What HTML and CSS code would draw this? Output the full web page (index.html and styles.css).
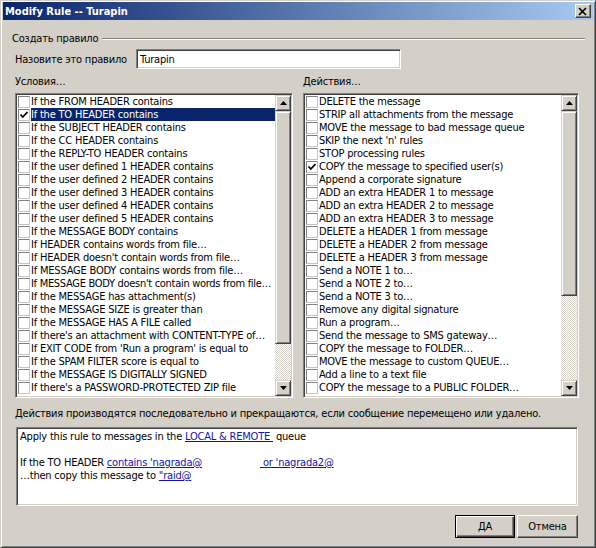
FILE: index.html
```html
<!DOCTYPE html>
<html lang="ru">
  <head>
    <meta charset="UTF-8" />
    <title>Modify Rule -- Turapin</title>
    <link rel="stylesheet" href="styles.css">
  </head>
  <body>
    <div class="window">
      <div class="titlebar">
        <span class="title">Modify Rule -- Turapin</span>
        <span class="close">
          <svg width="10" height="9" viewBox="0 0 10 9"><path d="M1 1 L8 8 M8 1 L1 8" stroke="#000" stroke-width="1.7" fill="none"/></svg>
        </span>
      </div>

      <div class="content">
        <div class="group">
          <span>Создать правило</span>
          <span class="etched"></span>
        </div>

        <div class="name-row">
          <label class="name-label" for="ruleName">Назовите это правило</label>
          <input id="ruleName" class="field" type="text" value="Turapin">
        </div>

        <div class="lists">
          <!-- conditions -->
          <div class="col">
            <div class="col-label">Условия…</div>
            <div class="listbox">
              <ul class="items">
                <li><span class="box"></span><span class="text">If the FROM HEADER contains</span></li>
                <li class="selected"><span class="box"><svg width="10" height="10" viewBox="0 0 10 10"><path d="M1.5 4.5 L3.8 7 L8.5 2" stroke="#000" stroke-width="1.8" fill="none"/></svg></span><span class="text">If the TO HEADER contains</span></li>
                <li><span class="box"></span><span class="text">If the SUBJECT HEADER contains</span></li>
                <li><span class="box"></span><span class="text">If the CC HEADER contains</span></li>
                <li><span class="box"></span><span class="text">If the REPLY-TO HEADER contains</span></li>
                <li><span class="box"></span><span class="text">If the user defined 1 HEADER contains</span></li>
                <li><span class="box"></span><span class="text">If the user defined 2 HEADER contains</span></li>
                <li><span class="box"></span><span class="text">If the user defined 3 HEADER contains</span></li>
                <li><span class="box"></span><span class="text">If the user defined 4 HEADER contains</span></li>
                <li><span class="box"></span><span class="text">If the user defined 5 HEADER contains</span></li>
                <li><span class="box"></span><span class="text">If the MESSAGE BODY contains</span></li>
                <li><span class="box"></span><span class="text">If HEADER contains words from file…</span></li>
                <li><span class="box"></span><span class="text">If HEADER doesn't contain words from file…</span></li>
                <li><span class="box"></span><span class="text">If MESSAGE BODY contains words from file…</span></li>
                <li><span class="box"></span><span class="text tight">If MESSAGE BODY doesn't contain words from file…</span></li>
                <li><span class="box"></span><span class="text">If the MESSAGE has attachment(s)</span></li>
                <li><span class="box"></span><span class="text">If the MESSAGE SIZE is greater than</span></li>
                <li><span class="box"></span><span class="text">If the MESSAGE HAS A FILE called</span></li>
                <li><span class="box"></span><span class="text">If there's an attachment with CONTENT-TYPE of…</span></li>
                <li><span class="box"></span><span class="text">If EXIT CODE from 'Run a program' is equal to</span></li>
                <li><span class="box"></span><span class="text">If the SPAM FILTER score is equal to</span></li>
                <li><span class="box"></span><span class="text">If the MESSAGE IS DIGITALLY SIGNED</span></li>
                <li><span class="box"></span><span class="text">If there's a PASSWORD-PROTECTED ZIP file</span></li>
              </ul>
              <div class="scrollbar">
                <span class="sb-btn"><svg width="7" height="4" viewBox="0 0 7 4"><path d="M0 4 L3.5 0 L7 4 Z" fill="#000"/></svg></span>
                <span class="sb-thumb thumb-left"></span>
                <span class="sb-track"></span>
                <span class="sb-btn"><svg width="7" height="4" viewBox="0 0 7 4"><path d="M0 0 L3.5 4 L7 0 Z" fill="#000"/></svg></span>
              </div>
            </div>
          </div>

          <!-- actions -->
          <div class="col">
            <div class="col-label">Действия…</div>
            <div class="listbox">
              <ul class="items">
                <li><span class="box"></span><span class="text">DELETE the message</span></li>
                <li><span class="box"></span><span class="text">STRIP all attachments from the message</span></li>
                <li><span class="box"></span><span class="text">MOVE the message to bad message queue</span></li>
                <li><span class="box"></span><span class="text">SKIP the next 'n' rules</span></li>
                <li><span class="box"></span><span class="text">STOP processing rules</span></li>
                <li><span class="box"><svg width="10" height="10" viewBox="0 0 10 10"><path d="M1.5 4.5 L3.8 7 L8.5 2" stroke="#000" stroke-width="1.8" fill="none"/></svg></span><span class="text">COPY the message to specified user(s)</span></li>
                <li><span class="box"></span><span class="text">Append a corporate signature</span></li>
                <li><span class="box"></span><span class="text">ADD an extra HEADER 1 to message</span></li>
                <li><span class="box"></span><span class="text">ADD an extra HEADER 2 to message</span></li>
                <li><span class="box"></span><span class="text">ADD an extra HEADER 3 to message</span></li>
                <li><span class="box"></span><span class="text">DELETE a HEADER 1 from message</span></li>
                <li><span class="box"></span><span class="text">DELETE a HEADER 2 from message</span></li>
                <li><span class="box"></span><span class="text">DELETE a HEADER 3 from message</span></li>
                <li><span class="box"></span><span class="text">Send a NOTE 1 to…</span></li>
                <li><span class="box"></span><span class="text">Send a NOTE 2 to…</span></li>
                <li><span class="box"></span><span class="text">Send a NOTE 3 to…</span></li>
                <li><span class="box"></span><span class="text">Remove any digital signature</span></li>
                <li><span class="box"></span><span class="text">Run a program…</span></li>
                <li><span class="box"></span><span class="text">Send the message to SMS gateway…</span></li>
                <li><span class="box"></span><span class="text">COPY the message to FOLDER…</span></li>
                <li><span class="box"></span><span class="text">MOVE the message to custom QUEUE…</span></li>
                <li><span class="box"></span><span class="text">Add a line to a text file</span></li>
                <li><span class="box"></span><span class="text">COPY the message to a PUBLIC FOLDER…</span></li>
              </ul>
              <div class="scrollbar">
                <span class="sb-btn"><svg width="7" height="4" viewBox="0 0 7 4"><path d="M0 4 L3.5 0 L7 4 Z" fill="#000"/></svg></span>
                <span class="sb-thumb thumb-right"></span>
                <span class="sb-track"></span>
                <span class="sb-btn"><svg width="7" height="4" viewBox="0 0 7 4"><path d="M0 0 L3.5 4 L7 0 Z" fill="#000"/></svg></span>
              </div>
            </div>
          </div>
        </div>

        <p class="note">Действия производятся последовательно и прекращаются, если сообщение перемещено или удалено.</p>

        <div class="desc">
          <div>Apply this rule to messages in the <a href="#">LOCAL &amp; REMOTE&nbsp;</a> queue</div>
          <div>&nbsp;</div>
          <div>If the TO HEADER <a href="#">contains 'nagrada@</a><span class="gap"></span><a href="#">&nbsp;or 'nagrada2@</a></div>
          <div>…then copy this message to <a href="#">"raid@</a></div>
        </div>

        <div class="buttons">
          <button class="btn default">ДА</button>
          <button class="btn cancel">Отмена</button>
        </div>
      </div>
    </div>
  </body>
</html>
```

FILE: styles.css
```css
body {
  margin: 0;
  padding: 0;
  font-family: "DejaVu Sans Condensed", "DejaVu Sans", sans-serif;
  font-stretch: condensed;
  font-size: 11px;
  letter-spacing: -0.2px;
  color: #000;
}

.window {
  width: 596px;
  height: 548px;
  box-sizing: border-box;
  background-color: #d4d0c8;
  border: 1px solid;
  border-color: #d4d0c8 #404040 #404040 #d4d0c8;
  box-shadow: inset 1px 1px #fff, inset -1px -1px #808080;
  padding: 1px 2px 2px 2px;
  display: flex;
  flex-direction: column;
}

.titlebar {
  height: 18px;
  flex: none;
  display: flex;
  align-items: center;
  justify-content: space-between;
  padding: 0 2px 0 2px;
  background: linear-gradient(to right, #0a246a, #a6caf0);
}

.title {
  color: #fff;
  font-weight: bold;
  font-size: 11px;
  letter-spacing: 0;
}

.close {
  width: 16px;
  height: 14px;
  box-sizing: border-box;
  display: flex;
  align-items: center;
  justify-content: center;
  background-color: #d4d0c8;
  border: 1px solid;
  border-color: #fff #404040 #404040 #fff;
  box-shadow: inset -1px -1px #808080;
}

.content {
  flex: 1;
  display: flex;
  flex-direction: column;
  padding: 12px 14px 0 12px;
}

/* group header with etched line */
.group {
  display: flex;
  align-items: center;
  height: 13px;
  line-height: 13px;
  margin-left: -3px;
  margin-right: -6px;
}

.etched {
  flex: 1;
  margin-left: 4px;
  border-top: 1px solid #808080;
  border-bottom: 1px solid #fff;
}

.name-row {
  display: flex;
  align-items: center;
  height: 20px;
  margin-top: 4px;
}

.name-label {
  width: 121px;
}

.field {
  width: 265px;
  height: 20px;
  box-sizing: border-box;
  margin: 0;
  padding: 0 3px;
  font: inherit;
  letter-spacing: inherit;
  background-color: #fff;
  border: 1px solid;
  border-color: #808080 #fff #fff #808080;
  box-shadow: inset 1px 1px #404040, inset -1px -1px #d4d0c8;
  outline: none;
}

.lists {
  display: grid;
  grid-template-columns: 278px 276px;
  column-gap: 10px;
  margin-top: 6px;
}

.col-label {
  line-height: 13px;
  margin-bottom: 5px;
}

.listbox {
  height: 305px;
  box-sizing: border-box;
  display: flex;
  background-color: #fff;
  border: 1px solid;
  border-color: #808080 #fff #fff #808080;
  box-shadow: inset 1px 1px #404040, inset -1px -1px #d4d0c8;
  padding: 1px;
}

.items {
  flex: 1;
  min-width: 0;
  list-style-type: none;
  margin: 0;
  padding: 0;
  overflow: hidden;
}

.items li {
  height: 13px;
  display: flex;
  align-items: center;
  white-space: nowrap;
}

.box {
  width: 12px;
  height: 12px;
  flex: none;
  box-sizing: border-box;
  margin: 0 1px;
  display: flex;
  align-items: center;
  justify-content: center;
  background-color: #fff;
  border: 1px solid;
  border-color: #808080 #c8c4bc #c8c4bc #808080;
}

.text {
  flex: 1;
  height: 13px;
  line-height: 13px;
  overflow: hidden;
}

.text.tight {
  letter-spacing: -0.3px;
}

.selected .text {
  background-color: #0a246a;
  color: #fff;
}

/* classic scrollbar */
.scrollbar {
  width: 16px;
  flex: none;
  display: flex;
  flex-direction: column;
}

.sb-btn,
.sb-thumb {
  box-sizing: border-box;
  background-color: #d4d0c8;
  border: 1px solid;
  border-color: #d4d0c8 #404040 #404040 #d4d0c8;
  box-shadow: inset 1px 1px #fff, inset -1px -1px #808080;
}

.sb-btn {
  height: 16px;
  display: flex;
  align-items: center;
  justify-content: center;
}

.thumb-left {
  height: 233px;
}

.thumb-right {
  height: 185px;
}

.sb-track {
  flex: 1;
  background: repeating-conic-gradient(#d4d0c8 0 25%, #fff 0 50%) 0 0 / 2px 2px;
}

.note {
  margin: 9px 0 0;
  line-height: 13px;
}

.desc {
  height: 79px;
  box-sizing: border-box;
  margin: 7px 1px 0 1px;
  padding: 2px 3px;
  background-color: #fff;
  border: 1px solid;
  border-color: #808080 #fff #fff #808080;
  box-shadow: inset 1px 1px #404040, inset -1px -1px #d4d0c8;
  line-height: 13px;
  white-space: nowrap;
}

.desc div {
  height: 13px;
}

.desc a {
  color: #1414a8;
  text-decoration: underline;
}

.gap {
  display: inline-block;
  width: 58px;
}

.buttons {
  display: flex;
  justify-content: flex-end;
  gap: 2px;
  margin: 9px 1px 0 0;
}

.btn {
  height: 23px;
  box-sizing: border-box;
  padding: 0;
  font: inherit;
  letter-spacing: inherit;
  color: #000;
  background-color: #d4d0c8;
  border: 1px solid;
  border-color: #fff #404040 #404040 #fff;
  box-shadow: inset -1px -1px #808080;
}

.btn.default {
  width: 60px;
  border-color: #000;
  box-shadow: inset 1px 1px #fff, inset -1px -1px #404040, inset -2px -2px #808080;
}

.btn.cancel {
  width: 61px;
}
```
